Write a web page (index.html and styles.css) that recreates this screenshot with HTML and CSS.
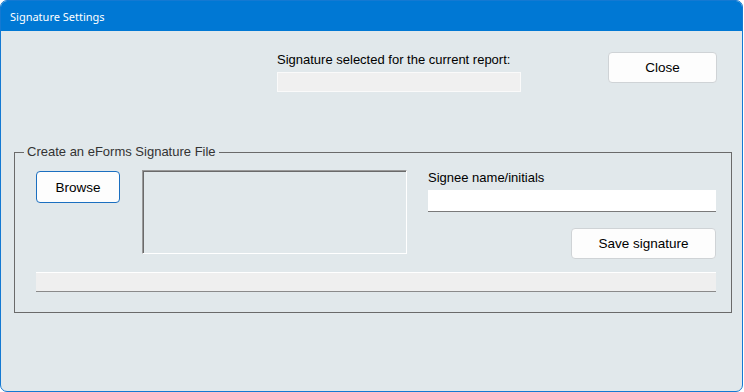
FILE: index.html
```html
<!DOCTYPE html>
<html>
<head>
<meta charset="utf-8">
<link rel="stylesheet" href="styles.css">
</head>
<body>
<div class="window">
  <div class="titlebar"><span class="title">Signature Settings</span></div>
  <div class="content">
    <div class="top-row">
      <div class="current">
        <div class="label">Signature selected for the current report:</div>
        <div class="readonly-box"></div>
      </div>
      <button class="btn close-btn">Close</button>
    </div>
    <fieldset class="group">
      <legend class="legend">Create an eForms Signature File</legend>
      <div class="group-row">
        <button class="btn browse-btn">Browse</button>
        <div class="picture"></div>
        <div class="signee">
          <div class="label">Signee name/initials</div>
          <div class="name-input"></div>
          <div class="save-wrap"><button class="btn save-btn">Save signature</button></div>
        </div>
      </div>
      <div class="progress"></div>
    </fieldset>
  </div>
</div>
</body>
</html>
```
FILE: styles.css
```css
html, body {
  margin: 0;
  padding: 0;
  background: #ffffff;
}
.window {
  box-sizing: border-box;
  width: 743px;
  height: 392px;
  border: 1px solid #1479d2;
  border-radius: 7px;
  background: #e1e8eb;
  overflow: hidden;
  display: flex;
  flex-direction: column;
}
.titlebar {
  height: 30px;
  background: #0078d4;
  display: flex;
  align-items: center;
  padding-left: 9px;
}
.title {
  color: #ffffff;
  font-family: "Noto Sans", "Liberation Sans", sans-serif;
  font-size: 11px;
}
.content {
  font-family: "Liberation Sans", Arial, sans-serif;
  font-size: 13px;
  color: #000;
}
.label {
  line-height: 16px;
  height: 16px;
  white-space: nowrap;
}
.top-row {
  display: flex;
  align-items: flex-start;
  margin-top: 21px;
  padding-left: 276px;
}
.readonly-box {
  box-sizing: border-box;
  width: 244px;
  height: 20px;
  margin-top: 4px;
  background: #f0f0f0;
  border: 1px solid #fafafa;
}
.btn {
  box-sizing: border-box;
  background: #fdfdfd;
  border: 1px solid #cfd3d6;
  border-radius: 4px;
  font-family: "Liberation Sans", Arial, sans-serif;
  font-size: 13.5px;
  color: #000;
  padding: 0;
  margin: 0;
}
.close-btn {
  width: 109px;
  height: 31px;
  margin-left: 87px;
}
.group {
  box-sizing: border-box;
  width: 718px;
  margin: 52px 0 0 13px;
  padding: 0 0 20px 0;
  border: 1px solid #6a6a6a;
  min-width: 0;
}
.legend {
  margin-left: 9px;
  padding: 0 3px;
  line-height: 16px;
  color: #333333;
}
.group-row {
  display: flex;
  align-items: flex-start;
  padding-top: 10px;
  padding-left: 21px;
}
.browse-btn {
  width: 84px;
  height: 32px;
  margin-top: 1px;
  border-color: #1b6fc0;
}
.picture {
  box-sizing: border-box;
  width: 265px;
  height: 84px;
  margin-left: 22px;
  border-top: 1px solid #999999;
  border-left: 1px solid #999999;
  border-right: 1px solid #ffffff;
  border-bottom: 1px solid #ffffff;
  box-shadow: inset 1px 1px 0 #6a6a6a;
}
.signee {
  width: 288px;
  margin-left: 21px;
  display: flex;
  flex-direction: column;
}
.name-input {
  box-sizing: border-box;
  height: 22px;
  margin-top: 4px;
  background: #ffffff;
  border-bottom: 1px solid #7a7a7a;
}
.save-wrap {
  display: flex;
  justify-content: flex-end;
  margin-top: 16px;
}
.save-btn {
  width: 145px;
  height: 31px;
}
.progress {
  box-sizing: border-box;
  width: 680px;
  height: 20px;
  margin: 13px 0 0 21px;
  background: #efefef;
  border-top: 1px solid #ffffff;
  border-bottom: 1px solid #8a8a8a;
}
```
